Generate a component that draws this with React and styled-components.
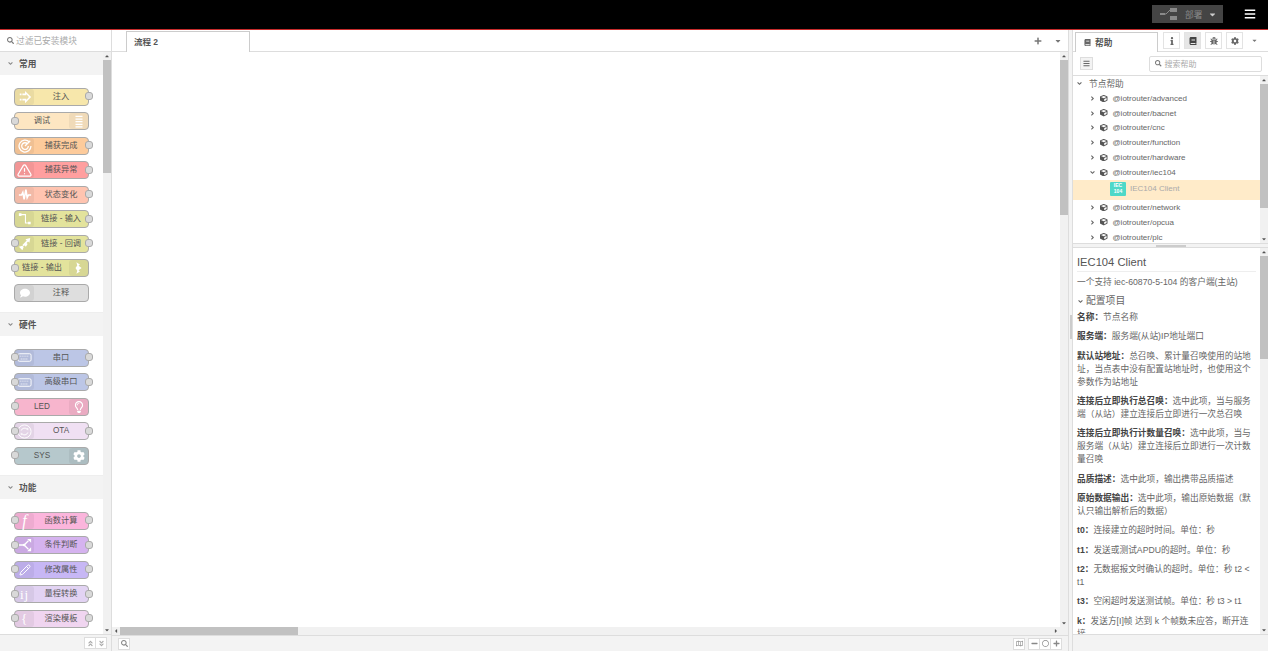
import React from 'react'
import styled, { createGlobalStyle } from 'styled-components'
import {
  FaAngleDoubleDown, FaAngleDoubleUp, FaAngleDown, FaAngleRight, FaBars, FaBook, FaBug, FaCaretDown,
  FaCaretLeft, FaCaretRight, FaCaretUp, FaCog, FaComment, FaCube, FaInfo, FaMinus, FaPlus, FaRegCircle,
  FaRegLightbulb, FaRegMap, FaSearch,
} from 'react-icons/fa'
import { FiAlertTriangle } from 'react-icons/fi'
import { LuPencil } from 'react-icons/lu'

const Global = createGlobalStyle`
  html, body { margin: 0; height: 100%; overflow: hidden; background: #fff; }
  #root { height: 100%; }
  * { box-sizing: border-box; }
  body { font-family: "Liberation Sans", "Noto Sans CJK SC", sans-serif; font-size: 8.7px; color: #555; }
`

const Icon = ({ children, size = 14 }) => (
  <svg width={size} height={size} viewBox="0 0 16 16" fill="#fff" stroke="none">{children}</svg>
)

const InjectIcon = () => <Icon><path d="M2 4h2v2H2zM2 10h2v2H2zM5 4h3V1l7 7-7 7v-3H5v-2h4.500v1.500L12.500 8 9.500 4.500V6H5z" /></Icon>
const ListIcon = () => <Icon><path d="M4 2h8v1.500H4zM4 5h8v1.500H4zM4 8h8v1.500H4zM4 11h8v1.500H4zM4 14h8v1.500H4z" /></Icon>
const RadarIcon = () => (
  <Icon>
    <g fill="none" stroke="#fff" strokeWidth="1.500">
      <path d="M13 3.500A6.800 6.800 0 1 0 14.800 8" />
      <path d="M10.800 5.500A3.800 3.800 0 1 0 11.800 8" />
      <path d="M8 8l6-6" />
    </g>
  </Icon>
)
const PulseIcon = () => (
  <Icon><path d="M1 8h3l1.500-3L7 13l2-11 1.500 9L12 8h3" fill="none" stroke="#fff" strokeWidth="1.800" /></Icon>
)
const LinkInIcon = () => (
  <Icon>
    <path d="M3 3h5.500v9.500H12" fill="none" stroke="#fff" strokeWidth="1.200" />
    <path d="M1 1.500h3v3H1zM11.500 11h3v3h-3z" />
  </Icon>
)
const LinkCallIcon = () => <Icon><path d="M1 11l4-1 1.500 1.500L5 15zM5 9l5-5-1.500-1.500L14 1l-1 5.500L11.500 5l-5 5.500zM9 6l2 2-2 3-2-2z" /></Icon>
const LinkOutIcon = () => <Icon><path d="M5 1.500l4 2.500-1.500 1.500 3.500 2.500-3.500 2.500L9 12l-4 2.500 1-3.500-2-3 2-3z" /></Icon>
const SerialIcon = () => (
  <Icon size={15}>
    <rect x="1" y="4" width="14" height="8" rx="1.500" fill="none" stroke="#fff" />
    <path d="M3 6h1v1H3zM5 6h1v1H5zM7 6h1v1H7zM9 6h1v1H9zM11 6h1v1h-1zM4 9h1v1H4zM6 9h1v1H6zM8 9h1v1H8zM10 9h1v1h-1z" />
  </Icon>
)
const OtaIcon = () => (
  <Icon size={15}>
    <circle cx="8" cy="8" r="7" fill="none" stroke="#fff" />
    <path d="M4.500 7a3.600 3.600 0 0 1 6.500-1M11.500 9a3.600 3.600 0 0 1-6.500 1" fill="none" stroke="#fff" />
    <path d="M10 4.500h2v2.500zM6 11.500H4V9z" />
  </Icon>
)
const SwitchIcon = () => (
  <Icon>
    <path d="M1 8h6l5-5M7 8l5 5" fill="none" stroke="#fff" strokeWidth="1.600" />
    <path d="M10.500 1H15v4.500zM10.500 15H15v-4.500z" />
    <circle cx="7" cy="8" r="1.500" />
  </Icon>
)

const Wrap = styled.div`
  height: 100%;
  display: flex;
  flex-direction: column;
`
const Header = styled.header`
  height: 30px;
  flex: none;
  background: #000;
  border-bottom: 1px solid #c62b2b;
  display: flex;
  align-items: center;
  justify-content: flex-end;
  padding-right: 12px;
  padding-bottom: 1px;
`
const Deploy = styled.div`
  width: 71px;
  height: 18px;
  background: #444;
  display: flex;
  align-items: center;
  color: #8a8a8a;
  padding: 0 6px 0 8px;
  margin-right: 21px;
  font-size: 8.700px;
  svg { flex: none; }
  span { margin-left: 8px; flex: 1; }
`
const Burger = styled(FaBars)`
  color: #fff;
  font-size: 12px;
`
const Body = styled.div`
  flex: 1;
  display: flex;
  min-height: 0;
`

const Palette = styled.aside`
  width: 112px;
  flex: none;
  display: flex;
  flex-direction: column;
  border-right: 1px solid #ddd;
`
const FilterBar = styled.div`
  height: 22px;
  flex: none;
  display: flex;
  align-items: center;
  padding-left: 7px;
  gap: 2px;
  color: #aaa;
  border-bottom: 1px solid #ddd;
  svg { font-size: 7px; color: #777; }
`
const PaletteBody = styled.div`
  flex: 1;
  min-height: 0;
  display: flex;
`
const PaletteList = styled.div`
  flex: 1;
  min-width: 0;
  overflow: hidden;
  background: #fff;
`
const CategoryHead = styled.div`
  height: 23px;
  background: #f3f3f3;
  display: flex;
  align-items: center;
  padding-left: 7px;
  gap: 5px;
  font-weight: bold;
  color: #555;
  svg { font-size: 7px; color: #888; }
`
const CategoryNodes = styled.div`
  display: flex;
  flex-direction: column;
  gap: 6.500px;
  padding: 12.500px 0 10.500px 14px;
  border-bottom: ${p => (p.$last ? 'none' : '1px solid #eee')};
`
const PNode = styled.div`
  position: relative;
  width: 75px;
  height: 18px;
  flex: none;
  display: flex;
  flex-direction: ${p => (p.$right ? 'row-reverse' : 'row')};
  background: ${p => p.$color};
  border: 1px solid #aaa;
  border-radius: 4px;
`
const NodeBand = styled.div`
  width: 19px;
  flex: none;
  display: flex;
  align-items: center;
  justify-content: center;
  background: rgba(0, 0, 0, 0.05);
  border-radius: 3px;
  color: #fff;
  font-size: 12px;
`
const NodeLabel = styled.div`
  flex: 1;
  text-align: center;
  font-size: 8.200px;
  line-height: 16px;
  color: #555;
  white-space: nowrap;
`
const Port = styled.span`
  position: absolute;
  top: 3.500px;
  ${p => (p.$side === 'left' ? 'left: -4.500px;' : 'right: -4.500px;')}
  width: 8px;
  height: 8px;
  border-radius: 3px;
  background: #d9d9d9;
  border: 1px solid #aaa;
`
const GlyphF = styled.span`
  font-family: "Liberation Serif", serif;
  font-style: italic;
  font-size: 16px;
  line-height: 1;
`
const GlyphText = styled.span`
  font-family: "Liberation Serif", serif;
  font-size: 13px;
  line-height: 1;
  letter-spacing: 1px;
`
const PaletteFoot = styled.div`
  height: 17px;
  flex: none;
  background: #f3f3f3;
  border-top: 1px solid #ddd;
  display: flex;
  align-items: center;
  justify-content: flex-end;
  padding-right: 4px;
`
const FootButton = styled.div`
  width: 12px;
  height: 12px;
  background: #fff;
  border: 1px solid #ddd;
  margin-left: ${p => (p.$joined ? '-1px' : '0')};
  display: flex;
  align-items: center;
  justify-content: center;
  color: #aaa;
  font-size: 7px;
`

const Track = styled.div`
  width: 8px;
  flex: none;
  background: #f1f1f1;
  display: flex;
  flex-direction: column;
  align-items: stretch;
  color: #555;
  font-size: 6px;
`
const TrackArrow = styled.div`
  height: 8px;
  flex: none;
  display: flex;
  align-items: center;
  justify-content: center;
  margin-top: ${p => (p.$end ? 'auto' : '0')};
`
const Thumb = styled.div`
  height: ${p => p.$size}px;
  background: #c1c1c1;
  flex: none;
`
const HTrack = styled.div`
  height: 8px;
  flex: none;
  background: #f1f1f1;
  display: flex;
  align-items: center;
  color: #555;
  font-size: 6px;
`
const HArrow = styled.div`
  width: 8px;
  flex: none;
  display: flex;
  justify-content: center;
  margin-left: ${p => (p.$end ? 'auto' : '0')};
`
const HThumb = styled.div`
  width: ${p => p.$size}px;
  height: 100%;
  background: #c1c1c1;
`

const Workspace = styled.main`
  flex: 1;
  min-width: 0;
  display: flex;
  flex-direction: column;
`
const TabBar = styled.div`
  height: 22px;
  flex: none;
  display: flex;
  align-items: flex-end;
  padding-left: 14px;
  border-bottom: 1px solid #ddd;
`
const FlowTab = styled.div`
  width: 124px;
  height: 21px;
  border: 1px solid #ccc;
  border-bottom: none;
  background: #fff;
  margin-bottom: -1px;
  padding-left: 7px;
  line-height: 20px;
  font-size: 8.500px;
  color: #555;
  font-weight: bold;
`
const TabTools = styled.div`
  margin-left: auto;
  align-self: center;
  display: flex;
  align-items: center;
  color: #777;
  gap: 12px;
  padding-right: 6px;
  font-size: 8px;
`
const CanvasRow = styled.div`
  flex: 1;
  min-height: 0;
  display: flex;
`
const Canvas = styled.div`
  flex: 1;
  background: #fff;
`
const WorkFoot = styled.div`
  height: 16px;
  flex: none;
  background: #f3f3f3;
  border-top: 1px solid #ddd;
  display: flex;
  align-items: center;
  padding: 0 6px;
`
const ToolButton = styled.div`
  width: 12px;
  height: 12px;
  background: #fff;
  border: 1px solid #ddd;
  margin-left: ${p => p.$margin};
  display: flex;
  align-items: center;
  justify-content: center;
  color: #888;
  font-size: 7px;
`

const Separator = styled.div`
  width: 5px;
  flex: none;
  background: #f3f3f3;
  border-left: 1px solid #ddd;
  border-right: 1px solid #ddd;
  display: flex;
  align-items: center;
  justify-content: center;
  &::after {
    content: "";
    width: 2px;
    height: 24px;
    margin-bottom: 28px;
    background: #ccc;
  }
`
const Sidebar = styled.aside`
  width: 195px;
  flex: none;
  display: flex;
  flex-direction: column;
`
const SideTabs = styled.div`
  height: 22px;
  flex: none;
  display: flex;
  align-items: flex-end;
  padding-left: 2px;
  border-bottom: 1px solid #ddd;
`
const HelpTab = styled.div`
  width: 83px;
  height: 20px;
  border: 1px solid #ccc;
  border-bottom: none;
  margin-bottom: -1px;
  background: #fff;
  display: flex;
  align-items: center;
  padding-left: 8px;
  gap: 4px;
  font-weight: bold;
  color: #555;
  svg { font-size: 7px; color: #666; }
`
const SideButtons = styled.div`
  display: flex;
  align-items: center;
  gap: 4px;
  margin-left: 5px;
  align-self: center;
`
const SideButton = styled.div`
  width: 17px;
  height: 17px;
  border: 1px solid #e3e3e3;
  background: ${p => (p.$active ? '#e6e6e6' : '#fff')};
  display: flex;
  align-items: center;
  justify-content: center;
  color: ${p => (p.$active ? '#444' : '#666')};
  font-size: 8px;
`
const SideCaret = styled.div`
  margin-left: 8px;
  align-self: center;
  font-size: 7px;
  color: #777;
  display: flex;
`
const HelpToolbar = styled.div`
  height: 24px;
  flex: none;
  display: flex;
  align-items: center;
  justify-content: space-between;
  padding: 0 6px 0 7px;
  border-bottom: 1px solid #ddd;
`
const ListButton = styled.div`
  width: 13px;
  height: 13px;
  background: #f3f3f3;
  border: 1px solid #ddd;
  display: flex;
  align-items: center;
  justify-content: center;
  font-size: 7px;
  color: #666;
`
const HelpSearch = styled.div`
  width: 113px;
  height: 16px;
  border: 1px solid #ddd;
  border-radius: 2px;
  display: flex;
  align-items: center;
  gap: 3px;
  padding-left: 5px;
  color: #aaa;
  font-size: 8px;
  svg { font-size: 6.500px; color: #777; }
`
const TreePane = styled.div`
  height: 167px;
  flex: none;
  display: flex;
`
const TreeList = styled.div`
  flex: 1;
  min-width: 0;
  overflow: hidden;
  font-size: 8px;
`
const TreeRow = styled.div`
  height: ${p => (p.$selected ? 20 : 14.850)}px;
  display: flex;
  align-items: center;
  padding-left: ${p => p.$indent}px;
  padding-bottom: ${p => (p.$selected ? 2 : 0)}px;
  background: ${p => (p.$selected ? '#ffebc9' : 'transparent')};
  color: ${p => (p.$selected ? '#aaa' : '#666')};
  white-space: nowrap;
`
const TreeArrow = styled.span`
  width: 10px;
  flex: none;
  display: flex;
  justify-content: center;
  font-size: 7px;
  color: #666;
`
const TreeTitle = styled.span`
  margin-left: 5px;
  font-size: 8.700px;
`
const TreeCube = styled(FaCube)`
  flex: none;
  font-size: 7.500px;
  color: #555;
  margin: 0 5px 0 3px;
`
const IecIcon = styled.span`
  width: 16px;
  height: 14px;
  flex: none;
  background: #4ed8c8;
  border-radius: 1px;
  color: #fff;
  font-size: 5px;
  line-height: 5.500px;
  font-weight: bold;
  text-align: center;
  padding-top: 1.500px;
  margin-right: 4px;
`
const HSplit = styled.div`
  height: 5px;
  flex: none;
  background: #f3f3f3;
  border-top: 1px solid #ddd;
  border-bottom: 1px solid #ddd;
  display: flex;
  align-items: center;
  justify-content: center;
  &::after {
    content: "";
    width: 30px;
    height: 2px;
    background: #ccc;
  }
`
const HelpPane = styled.div`
  flex: 1;
  min-height: 0;
  display: flex;
`
const HelpBody = styled.div`
  flex: 1;
  min-width: 0;
  overflow: hidden;
  padding: 0 4px;
  line-height: 13px;
  color: #666;
`
const HelpTitle = styled.h3`
  margin: 7px 0 0;
  font-size: 11.200px;
  font-weight: normal;
  line-height: 15px;
  padding-bottom: 1px;
  color: #555;
  border-bottom: 1px solid #eee;
`
const HelpLead = styled.p`
  margin: 4px 0 0;
`
const ConfigHead = styled.div`
  margin-top: 5px;
  font-size: 9.800px;
  line-height: 14px;
  display: flex;
  align-items: center;
  gap: 2px;
  svg { font-size: 7px; }
`
const HelpPara = styled.p`
  margin: 0 0 6.350px;
  b { color: #444; }
`
const ParaList = styled.div`
  margin-top: 3px;
`
const SideFoot = styled.div`
  height: 17px;
  flex: none;
  background: #f3f3f3;
  border-top: 1px solid #ddd;
`

const groups = [
  {
    title: '常用',
    nodes: [
      { label: '注入', color: '#f7e7ab', icon: <InjectIcon />, out: true },
      { label: '调试', color: '#fde6c2', icon: <ListIcon />, in: true, right: true },
      { label: '捕获完成', color: '#fdcb9b', icon: <RadarIcon />, out: true },
      { label: '捕获异常', color: '#ff9f9f', icon: <FiAlertTriangle size={15} />, out: true },
      { label: '状态变化', color: '#ffc4b0', icon: <PulseIcon />, out: true },
      { label: '链接 - 输入', color: '#e3e39c', icon: <LinkInIcon />, out: true },
      { label: '链接 - 回调', color: '#e3e39c', icon: <LinkCallIcon />, in: true, out: true },
      { label: '链接 - 输出', color: '#e3e39c', icon: <LinkOutIcon />, in: true, right: true },
      { label: '注释', color: '#dedede', icon: <FaComment size={10} /> },
    ],
  },
  {
    title: '硬件',
    nodes: [
      { label: '串口', color: '#bcc6e6', icon: <SerialIcon />, in: true, out: true },
      { label: '高级串口', color: '#bcc6e6', icon: <SerialIcon />, in: true, out: true },
      { label: 'LED', color: '#f7b5cd', icon: <FaRegLightbulb size={12} />, in: true, right: true },
      { label: 'OTA', color: '#f0e0f3', icon: <OtaIcon />, in: true, out: true },
      { label: 'SYS', color: '#b6c8cc', icon: <FaCog size={12} />, in: true, right: true },
    ],
  },
  {
    title: '功能',
    nodes: [
      { label: '函数计算', color: '#fbb5dc', icon: <GlyphF>f</GlyphF>, in: true, out: true },
      { label: '条件判断', color: '#d5b3ef', icon: <SwitchIcon />, in: true, out: true },
      { label: '修改属性', color: '#c7b7f5', icon: <LuPencil size={12} />, in: true, out: true },
      { label: '量程转换', color: '#e2d3f3', icon: <GlyphText>ij</GlyphText>, in: true, out: true },
      { label: '渲染模板', color: '#f0d5f0', icon: <GlyphText>{'{'}</GlyphText>, in: true, out: true },
      // next node is only just showing at the fold
      { label: '', color: '#ff8f80', in: true, out: true },
    ],
  },
]

const packages = ['advanced', 'bacnet', 'cnc', 'function', 'hardware']
const laterPackages = ['network', 'opcua', 'plc']

// full-width punctuation, as in the original help text
const COLON = '\uFF1A'
const COMMA = '\uFF0C'
const OPEN = '\uFF08'
const CLOSE = '\uFF09'

const helpParas = [
  [`名称${COLON}`, '节点名称'],
  [`服务端${COLON}`, '服务端(从站)IP地址端口'],
  [`默认站地址${COLON}`, `总召唤、累计量召唤使用的站地址${COMMA}当点表中没有配置站地址时${COMMA}也使用这个参数作为站地址`],
  [`连接后立即执行总召唤${COLON}`, `选中此项${COMMA}当与服务端${OPEN}从站${CLOSE}建立连接后立即进行一次总召唤`],
  [`连接后立即执行计数量召唤${COLON}`, `选中此项${COMMA}当与服务端${OPEN}从站${CLOSE}建立连接后立即进行一次计数量召唤`],
  [`品质描述${COLON}`, `选中此项${COMMA}输出携带品质描述`],
  [`原始数据输出${COLON}`, `选中此项${COMMA}输出原始数据${OPEN}默认只输出解析后的数据${CLOSE}`],
  [`t0${COLON}`, `连接建立的超时时间。单位${COLON}秒`],
  [`t1${COLON}`, `发送或测试APDU的超时。单位${COLON}秒`],
  [`t2${COLON}`, `无数据报文时确认的超时。单位${COLON}秒 t2 < t1`],
  [`t3${COLON}`, `空闲超时发送测试帧。单位${COLON}秒 t3 > t1`],
  [`k${COLON}`, `发送方[I]帧 达到 k 个帧数未应答${COMMA}断开连接`],
]

const ScrollBar = ({ size }) => (
  <Track>
    <TrackArrow><FaCaretUp /></TrackArrow>
    <Thumb $size={size} />
    <TrackArrow $end><FaCaretDown /></TrackArrow>
  </Track>
)

const PackageRow = ({ name, open }) => (
  <TreeRow $indent={14}>
    <TreeArrow>{open ? <FaAngleDown /> : <FaAngleRight />}</TreeArrow>
    <TreeCube />
    @iotrouter/{name}
  </TreeRow>
)

const App = () => (
  <Wrap>
    <Global />
    <Header>
      <Deploy>
        <svg width="17" height="12" viewBox="0 0 17 12">
          <path d="M0 5h5v2H0zM10 0h7v4h-7zM10 8h7v4h-7z" fill="#8a8a8a" />
          <path d="M4 6h2l4-4" stroke="#8a8a8a" fill="none" />
        </svg>
        <span>部署</span>
        <FaCaretDown color="#ccc" size={9} />
      </Deploy>
      <Burger />
    </Header>
    <Body>
      <Palette>
        <FilterBar><FaSearch />过滤已安装模块</FilterBar>
        <PaletteBody>
          <PaletteList>
            {groups.map((g, i) => (
              <React.Fragment key={g.title}>
                <CategoryHead><FaAngleDown />{g.title}</CategoryHead>
                <CategoryNodes $last={i === groups.length - 1}>
                  {g.nodes.map(n => (
                    <PNode key={n.label} $color={n.color} $right={n.right}>
                      <NodeBand>{n.icon}</NodeBand>
                      <NodeLabel>{n.label}</NodeLabel>
                      {n.in && <Port $side="left" />}
                      {n.out && <Port $side="right" />}
                    </PNode>
                  ))}
                </CategoryNodes>
              </React.Fragment>
            ))}
          </PaletteList>
          <ScrollBar size={113} />
        </PaletteBody>
        <PaletteFoot>
          <FootButton><FaAngleDoubleUp /></FootButton>
          <FootButton $joined><FaAngleDoubleDown /></FootButton>
        </PaletteFoot>
      </Palette>
      <Workspace>
        <TabBar>
          <FlowTab>流程 2</FlowTab>
          <TabTools><FaPlus /><FaCaretDown /></TabTools>
        </TabBar>
        <CanvasRow>
          <Canvas />
          <ScrollBar size={155} />
        </CanvasRow>
        <HTrack>
          <HArrow><FaCaretLeft /></HArrow>
          <HThumb $size={178} />
          <HArrow $end><FaCaretRight /></HArrow>
          <HArrow />
        </HTrack>
        <WorkFoot>
          <ToolButton $margin="0"><FaSearch /></ToolButton>
          <ToolButton $margin="auto"><FaRegMap /></ToolButton>
          <ToolButton $margin="3px"><FaMinus /></ToolButton>
          <ToolButton $margin="-1px"><FaRegCircle /></ToolButton>
          <ToolButton $margin="-1px"><FaPlus /></ToolButton>
        </WorkFoot>
      </Workspace>
      <Separator />
      <Sidebar>
        <SideTabs>
          <HelpTab><FaBook />帮助</HelpTab>
          <SideButtons>
            <SideButton><FaInfo /></SideButton>
            <SideButton $active><FaBook /></SideButton>
            <SideButton><FaBug /></SideButton>
            <SideButton><FaCog /></SideButton>
          </SideButtons>
          <SideCaret><FaCaretDown /></SideCaret>
        </SideTabs>
        <HelpToolbar>
          <ListButton><FaBars /></ListButton>
          <HelpSearch><FaSearch />搜索帮助</HelpSearch>
        </HelpToolbar>
        <TreePane>
          <TreeList>
            <TreeRow $indent={1}><TreeArrow><FaAngleDown /></TreeArrow><TreeTitle>节点帮助</TreeTitle></TreeRow>
            {packages.map(p => <PackageRow key={p} name={p} />)}
            <PackageRow name="iec104" open />
            <TreeRow $selected $indent={37}><IecIcon>IEC<br />104</IecIcon>IEC104 Client</TreeRow>
            {laterPackages.map(p => <PackageRow key={p} name={p} />)}
          </TreeList>
          <ScrollBar size={124} />
        </TreePane>
        <HSplit />
        <HelpPane>
          <HelpBody>
            <HelpTitle>IEC104 Client</HelpTitle>
            <HelpLead>一个支持 iec-60870-5-104 的客户端(主站)</HelpLead>
            <ConfigHead><FaAngleDown />配置项目</ConfigHead>
            <ParaList>
              {helpParas.map(([k, v]) => (
                <HelpPara key={k}><b>{k}</b>{v}</HelpPara>
              ))}
            </ParaList>
          </HelpBody>
          <ScrollBar size={103} />
        </HelpPane>
        <SideFoot />
      </Sidebar>
    </Body>
  </Wrap>
)

export default App
